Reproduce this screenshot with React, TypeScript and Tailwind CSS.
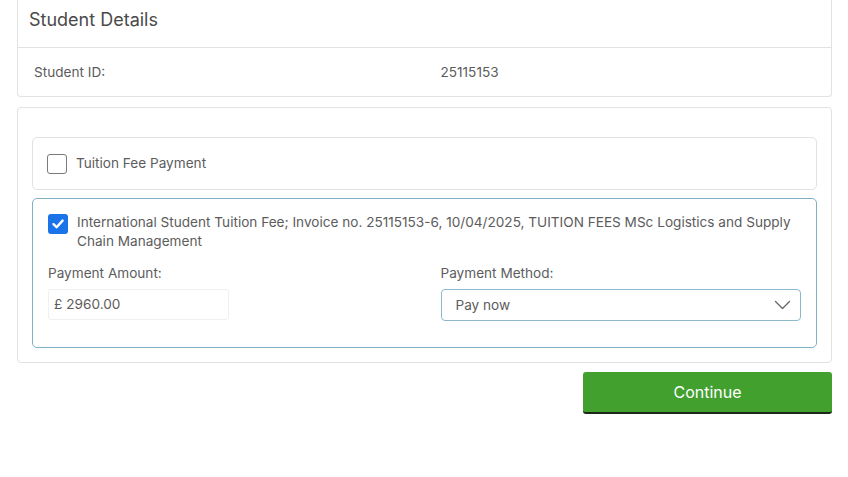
import React from "react";

const font = { fontFamily: "Inter, 'Noto Sans', sans-serif" };

const Panel = ({ children, className = "" }: { children: React.ReactNode; className?: string }) => (
  <div className={`bg-white border border-[#e2e2e2] ${className}`}>{children}</div>
);

const App = () => {
  return (
    <div className="w-[848px] h-[477px] bg-white pl-[17px] pr-[16px] overflow-hidden text-[#5c5c5c]" style={font}>
      <Panel className="border-t-0 rounded-b-[4px]">
        <div className="px-[11px] pt-[4px] pb-[12px] border-b border-[#e2e2e2]">
          <h2 className="text-[18px] leading-[31px] text-[#4a4a4a] font-normal">Student Details</h2>
        </div>
        <div className="grid grid-cols-2 gap-8 px-4 h-[48px] items-center text-[13.6px]">
          <span>Student ID:</span>
          <span>25115153</span>
        </div>
      </Panel>

      <Panel className="mt-[10px] rounded-[4px] px-[14px] pt-[29px] pb-[14px]">
        <div className="flex flex-col gap-2">
          <div className="border border-[#e2e2e2] rounded-[5px] h-[53px] px-[14px] flex items-center gap-[9px]">
            <span className="w-5 h-5 rounded-[3px] border border-[#7a7a7a] bg-white shrink-0" />
            <span className="text-[13.6px]">Tuition Fee Payment</span>
          </div>

          <div className="border border-[#7fb0c6] rounded-[5px] px-[15px] pt-[14px] pb-[26px]">
            <div className="flex items-start gap-[9px]">
              <span className="w-5 h-5 mt-[1px] rounded-[3px] bg-[#1a73e8] shrink-0 flex items-center justify-center">
                <svg width="14" height="14" viewBox="0 0 14 14" fill="none">
                  <path d="M2.5 7.2 L5.6 10.2 L11.6 3.6" stroke="white" strokeWidth="2.4" strokeLinecap="round" strokeLinejoin="round" />
                </svg>
              </span>
              <p className="text-[13.6px] leading-[19px] pr-2">
                International Student Tuition Fee; Invoice no. 25115153-6, 10/04/2025, TUITION FEES MSc Logistics and Supply Chain Management
              </p>
            </div>
            <div className="grid grid-cols-2 gap-8 mt-[12px] text-[13.6px]">
              <div>
                <div className="leading-[20px] mb-[6px]">Payment Amount:</div>
                <div className="w-[181px] h-[31px] border border-[#f0f0f0] rounded-[3px] flex items-center px-[5px] gap-[4px]">
                  <span>£</span>
                  <span>2960.00</span>
                </div>
              </div>
              <div>
                <div className="leading-[20px] mb-[6px]">Payment Method:</div>
                <div className="h-[32px] border border-[#8cb8cf] rounded-[4px] flex items-center justify-between pl-[14px] pr-[9px]">
                  <span>Pay now</span>
                  <svg width="17" height="10" viewBox="0 0 17 10" fill="none">
                    <path d="M1.5 1.5 L8.5 8.5 L15.5 1.5" stroke="#666" strokeWidth="1.3" strokeLinecap="round" strokeLinejoin="round" />
                  </svg>
                </div>
              </div>
            </div>
          </div>
        </div>
      </Panel>

      <div className="flex justify-end mt-[9px]">
        <button className="w-[249px] h-[42px] bg-[#42a02f] text-white text-[16px] rounded-[3px] border-b-2 border-[#1b2a17]">
          Continue
        </button>
      </div>
    </div>
  );
};

export default App;
